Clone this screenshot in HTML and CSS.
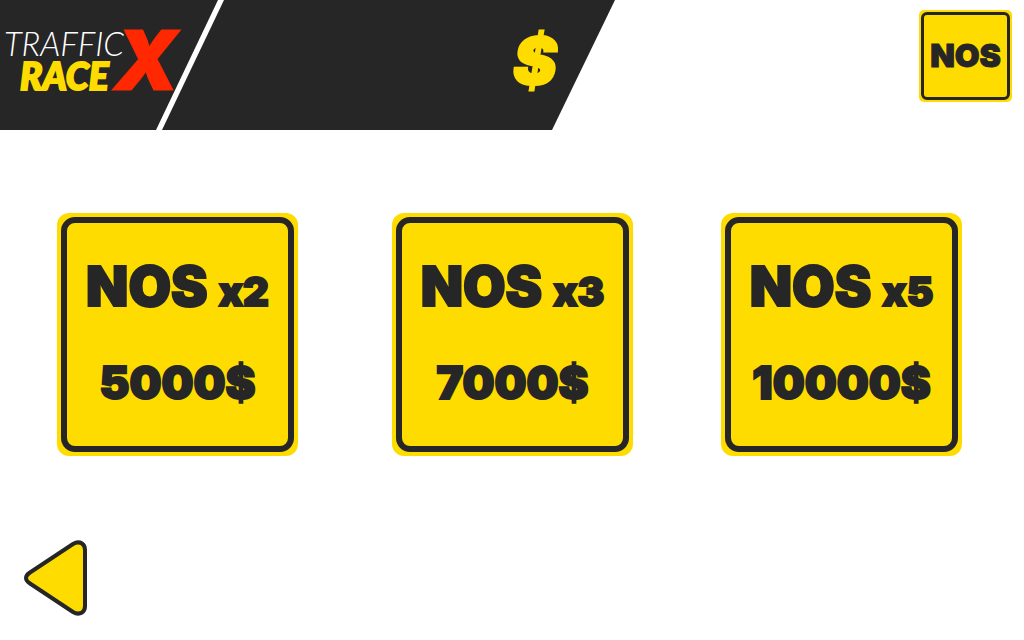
FILE: index.html
```html
<!DOCTYPE html>
<html lang="en">
<head>
<meta charset="utf-8">
<meta name="viewport" content="width=device-width, initial-scale=1">
<title>Traffic Race X</title>
<link rel="stylesheet" href="styles.css">
</head>
<body>
<header class="topbar">
  <h1 class="brand">
    <span class="brand-words"><span class="brand-traffic">TRAFFIC</span><span class="brand-race">RACE</span></span>
    <span class="brand-x">X</span>
  </h1>
  <div class="wallet">$</div>
  <button class="sign sign-small" type="button"><span class="sign-face">NOS</span></button>
</header>
<main class="shop">
  <button class="sign offer" type="button"><span class="sign-face"><span class="item"><span>NOS</span><span class="count">x2</span></span><span class="price">5000$</span></span></button>
  <button class="sign offer" type="button"><span class="sign-face"><span class="item"><span>NOS</span><span class="count">x3</span></span><span class="price">7000$</span></span></button>
  <button class="sign offer" type="button"><span class="sign-face"><span class="item"><span>NOS</span><span class="count">x5</span></span><span class="price">10000$</span></span></button>
</main>
<footer class="bottom">
  <button class="back" type="button" aria-label="Back">
    <svg width="64" height="76" viewBox="0 0 64 76" aria-hidden="true"><path d="M6 32.500 L49 4 Q54 1 58 3.5 Q61 5.5 61 10 V66 Q61 70.500 58 72.500 Q54 75 49 72 L6 43.500 Q2 41 2 38 Q2 35 6 32.500Z" fill="#ffdc00" stroke="#262626" stroke-width="4" stroke-linejoin="round"/></svg>
  </button>
</footer>
</body>
</html>
```
FILE: styles.css
```css
* { box-sizing: border-box; }

body {
  margin: 0;
  min-height: 100vh;
  display: flex;
  flex-direction: column;
  background: #fff;
  color: #262626;
  font-family: Inter, "Open Sans", sans-serif;
}

button {
  margin: 0;
  padding: 0;
  border: 0;
  background: none;
  color: inherit;
  font: inherit;
  cursor: pointer;
}

.topbar {
  display: flex;
  align-items: flex-start;
  height: 130px;
}

.brand {
  display: flex;
  flex: none;
  width: 218px;
  height: 130px;
  margin: 0;
  padding: 25px 0 0 4px;
  background: #262626;
  clip-path: polygon(0 0, 100% 0, 156px 100%, 0 100%);
  font-style: italic;
}

.brand-words {
  display: flex;
  flex-direction: column;
  width: 110px;
  font-family: Lato, "Open Sans", sans-serif;
}

.brand-traffic {
  color: #fff;
  font-size: 33px;
  font-weight: 300;
  line-height: 36px;
}

.brand-race {
  padding-left: 16px;
  color: #ffdc00;
  font-size: 37px;
  font-weight: 900;
  line-height: 30px;
  -webkit-text-stroke: 2px #ffdc00;
}

.brand-x {
  color: #ff2800;
  font-size: 82px;
  font-weight: 900;
  line-height: 72px;
  -webkit-text-stroke: 1px #ff2800;
}

.wallet {
  flex: none;
  width: 453px;
  height: 130px;
  margin-left: -56px;
  padding-right: 58px;
  background: #262626;
  clip-path: polygon(62px 0, 100% 0, 390px 100%, 0 100%);
  color: #ffdc00;
  font-size: 66px;
  font-style: italic;
  font-weight: 900;
  line-height: 122px;
  text-align: right;
  -webkit-text-stroke: 2px #ffdc00;
}

.sign {
  padding: 4px;
  border-radius: 12px;
  background: #ffdc00;
}

.sign-face {
  display: flex;
  flex-direction: column;
  align-items: center;
  height: 100%;
  border: 6px solid #262626;
  border-radius: 14px;
  font-weight: 900;
  white-space: nowrap;
  -webkit-text-stroke: 2px #262626;
}

.sign-small {
  width: 93px;
  height: 92px;
  margin: 10px 12px 0 auto;
  padding: 2px;
  border-radius: 5px;
}

.sign-small .sign-face {
  justify-content: center;
  padding-bottom: 2px;
  border-width: 3px;
  border-radius: 6px;
  font-size: 32px;
  -webkit-text-stroke-width: 1px;
}

.shop {
  display: grid;
  grid-template-columns: 335fr 329fr 241fr;
  padding: 83px 62px 0 57px;
}

.offer {
  width: 241px;
  height: 243px;
}

.offer .sign-face {
  padding-top: 30px;
}

.item {
  display: flex;
  align-items: baseline;
  gap: 11px;
  font-size: 55px;
  line-height: 66px;
}

.count {
  font-size: 40px;
}

.price {
  margin-top: 31px;
  font-size: 45px;
  line-height: 54px;
}

.bottom {
  margin-top: auto;
  padding: 0 24px 24px;
}

.back {
  display: block;
}

.back svg {
  display: block;
}
```
